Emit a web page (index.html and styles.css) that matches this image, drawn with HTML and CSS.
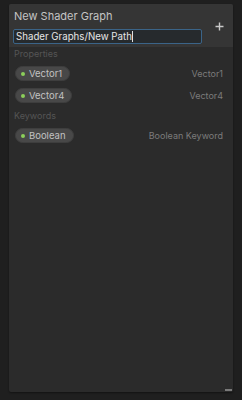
FILE: index.html
```html
<!DOCTYPE html>
<html>
<head>
<meta charset="utf-8">
<link rel="stylesheet" href="styles.css">
</head>
<body>
<div class="panel">
  <div class="header">
    <div class="head-main">
      <div class="title">New Shader Graph</div>
      <div class="field"><span class="field-text">Shader Graphs/New Path</span><span class="caret"></span></div>
    </div>
    <div class="add">
      <svg width="9" height="9" viewBox="0 0 9 9"><path d="M4.5 0.5V8.5M0.5 4.5H8.5" stroke="#c9c9c9" stroke-width="1.4"/></svg>
    </div>
  </div>
  <div class="body">
    <div class="section">Properties</div>
    <div class="row">
      <div class="pill"><span class="dot"></span><span class="pill-text">Vector1</span></div>
      <div class="type">Vector1</div>
    </div>
    <div class="row">
      <div class="pill"><span class="dot"></span><span class="pill-text">Vector4</span></div>
      <div class="type">Vector4</div>
    </div>
    <div class="section">Keywords</div>
    <div class="row">
      <div class="pill"><span class="dot"></span><span class="pill-text">Boolean</span></div>
      <div class="type">Boolean Keyword</div>
    </div>
  </div>
  <div class="resize"></div>
</div>
</body>
</html>
```
FILE: styles.css
```css
html, body {
  margin: 0;
  padding: 0;
  background: #1f1f1f;
  font-family: Inter, "Noto Sans", sans-serif;
}
body {
  height: 400px;
  overflow: hidden;
}
.panel {
  position: relative;
  margin: 4px 0 0 9px;
  width: 224px;
  height: 388px;
  background: #2b2b2b;
  border-radius: 2px;
  display: flex;
  flex-direction: column;
  box-shadow: 0 1px 2px rgba(0,0,0,0.4);
}
.header {
  background: #353535;
  height: 43px;
  box-sizing: border-box;
  padding: 4px 9px 0 4px;
  display: flex;
  align-items: flex-start;
  border-radius: 2px 2px 0 0;
}
.head-main {
  flex: 1;
  display: flex;
  flex-direction: column;
}
.title {
  font-size: 11px;
  line-height: 16px;
  height: 16px;
  color: #c4c4c4;
  padding-left: 1px;
  margin-bottom: 5px;
}
.field {
  width: 189px;
  height: 15px;
  box-sizing: border-box;
  border: 1px solid #3b6488;
  border-radius: 2px;
  background: #262a2d;
  display: flex;
  align-items: center;
  padding-left: 2px;
}
.field-text {
  font-size: 9.7px;
  color: #e6e6e6;
  line-height: 13px;
}
.caret {
  width: 1px;
  height: 11px;
  background: #e0e0e0;
}
.add {
  width: 9px;
  height: 9px;
  margin-top: 14px;
  display: flex;
}
.body {
  flex: 1;
  padding: 1px 10px 0 5px;
  display: flex;
  flex-direction: column;
}
.section {
  font-size: 9px;
  line-height: 12px;
  height: 12px;
  color: #555555;
  margin-bottom: 6px;
}
.row {
  display: flex;
  align-items: center;
  justify-content: space-between;
  height: 15px;
  margin-left: 1px;
  margin-bottom: 7px;
}
.pill {
  height: 15px;
  box-sizing: border-box;
  border-radius: 8px;
  background: #484848;
  border: 1px solid #3e3e3e;
  display: flex;
  align-items: center;
  padding: 0 7px 0 5px;
}
.dot {
  width: 4px;
  height: 4px;
  border-radius: 50%;
  background: #8ccf5a;
  margin-right: 4px;
}
.pill-text {
  font-size: 9.5px;
  color: #c2c2c2;
  line-height: 12px;
}
.type {
  font-size: 9px;
  color: #7b7b7b;
}
.resize {
  position: absolute;
  right: 1px;
  bottom: 1px;
  width: 7px;
  height: 2px;
  background: #7a7a7a;
}
```
